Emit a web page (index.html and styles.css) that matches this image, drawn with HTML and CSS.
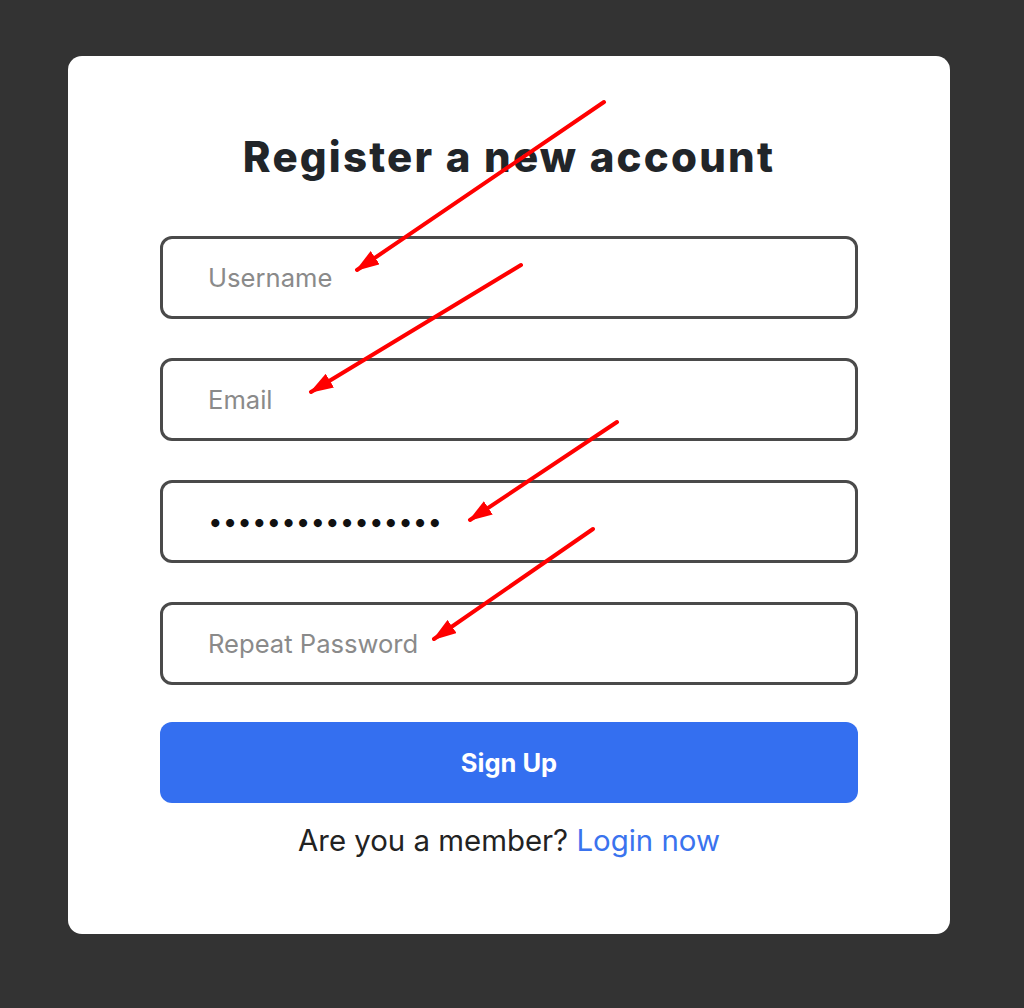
FILE: index.html
```html
<!DOCTYPE html>
<html lang="en">
<head>
  <meta charset="UTF-8" />
  <meta name="viewport" content="width=device-width, initial-scale=1" />
  <title>Register</title>
  <link rel="stylesheet" href="styles.css">
</head>
<body>

  <div class="card">
    <h1>Register a new account</h1>

    <form class="form" action="#">
      <input type="text" class="field" placeholder="Username" />
      <input type="email" class="field" placeholder="Email" />
      <input type="password" class="field" value="passwordpassword" />
      <input type="password" class="field" placeholder="Repeat Password" />
      <button type="submit" class="signup-btn">Sign Up</button>
    </form>

    <p class="member">Are you a member? <a href="#" class="login">Login now</a></p>
  </div>

  <!-- annotation arrows -->
  <svg class="arrows" width="1024" height="1008" viewBox="0 0 1024 1008">
    <defs>
      <marker id="head" markerUnits="userSpaceOnUse" markerWidth="24" markerHeight="16" refX="22" refY="8" orient="auto">
        <path d="M0,0 L24,8 L0,16 z" fill="#ff0000" />
      </marker>
    </defs>
    <g stroke="#ff0000" stroke-width="4" stroke-linecap="round" marker-end="url(#head)">
      <line x1="604" y1="102" x2="357" y2="270" />
      <line x1="521" y1="265" x2="311" y2="392" />
      <line x1="617" y1="422" x2="470" y2="520" />
      <line x1="593" y1="529" x2="434" y2="639" />
    </g>
  </svg>

</body>
</html>
```

FILE: styles.css
```css
body {
  margin: 0;
  min-height: 1008px;
  padding: 56px 0 0 68px;
  box-sizing: border-box;
  background-color: #333333;
  font-family: 'Inter', sans-serif;
  color: #222;
  position: relative;
}

.card {
  width: 882px;
  box-sizing: border-box;
  background-color: white;
  border-radius: 14px;
  padding: 77px 92px 77px;
  text-align: center;
}

h1 {
  margin: 0 0 55px;
  font-size: 42px;
  line-height: 48px;
  font-weight: 800;
  color: #212529;
  letter-spacing: 2.2px;
}

.form {
  display: flex;
  flex-direction: column;
  gap: 39px;
}

.field {
  height: 83px;
  box-sizing: border-box;
  border: 3px solid #4a4a4a;
  border-radius: 12px;
  padding: 0 45px;
  font-family: 'Inter', sans-serif;
  font-size: 25.6px;
  color: #111;
  outline: none;
}

.field::placeholder {
  color: #8a8a8a;
}

.field[type="password"] {
  font-size: 26px;
}

.field[type="password"]::placeholder {
  font-size: 25.6px;
}

.signup-btn {
  margin-top: -2px;
  height: 81px;
  border: none;
  border-radius: 12px;
  background-color: #346ff0;
  color: white;
  font-family: 'Inter', sans-serif;
  font-size: 25.5px;
  font-weight: 700;
  cursor: pointer;
}

.member {
  margin: 22px 0 0;
  font-size: 29.4px;
  line-height: 32px;
  color: #222;
}

.login {
  color: #3a73ee;
  text-decoration: none;
}

.arrows {
  position: absolute;
  top: 0;
  left: 0;
  pointer-events: none;
}
```
